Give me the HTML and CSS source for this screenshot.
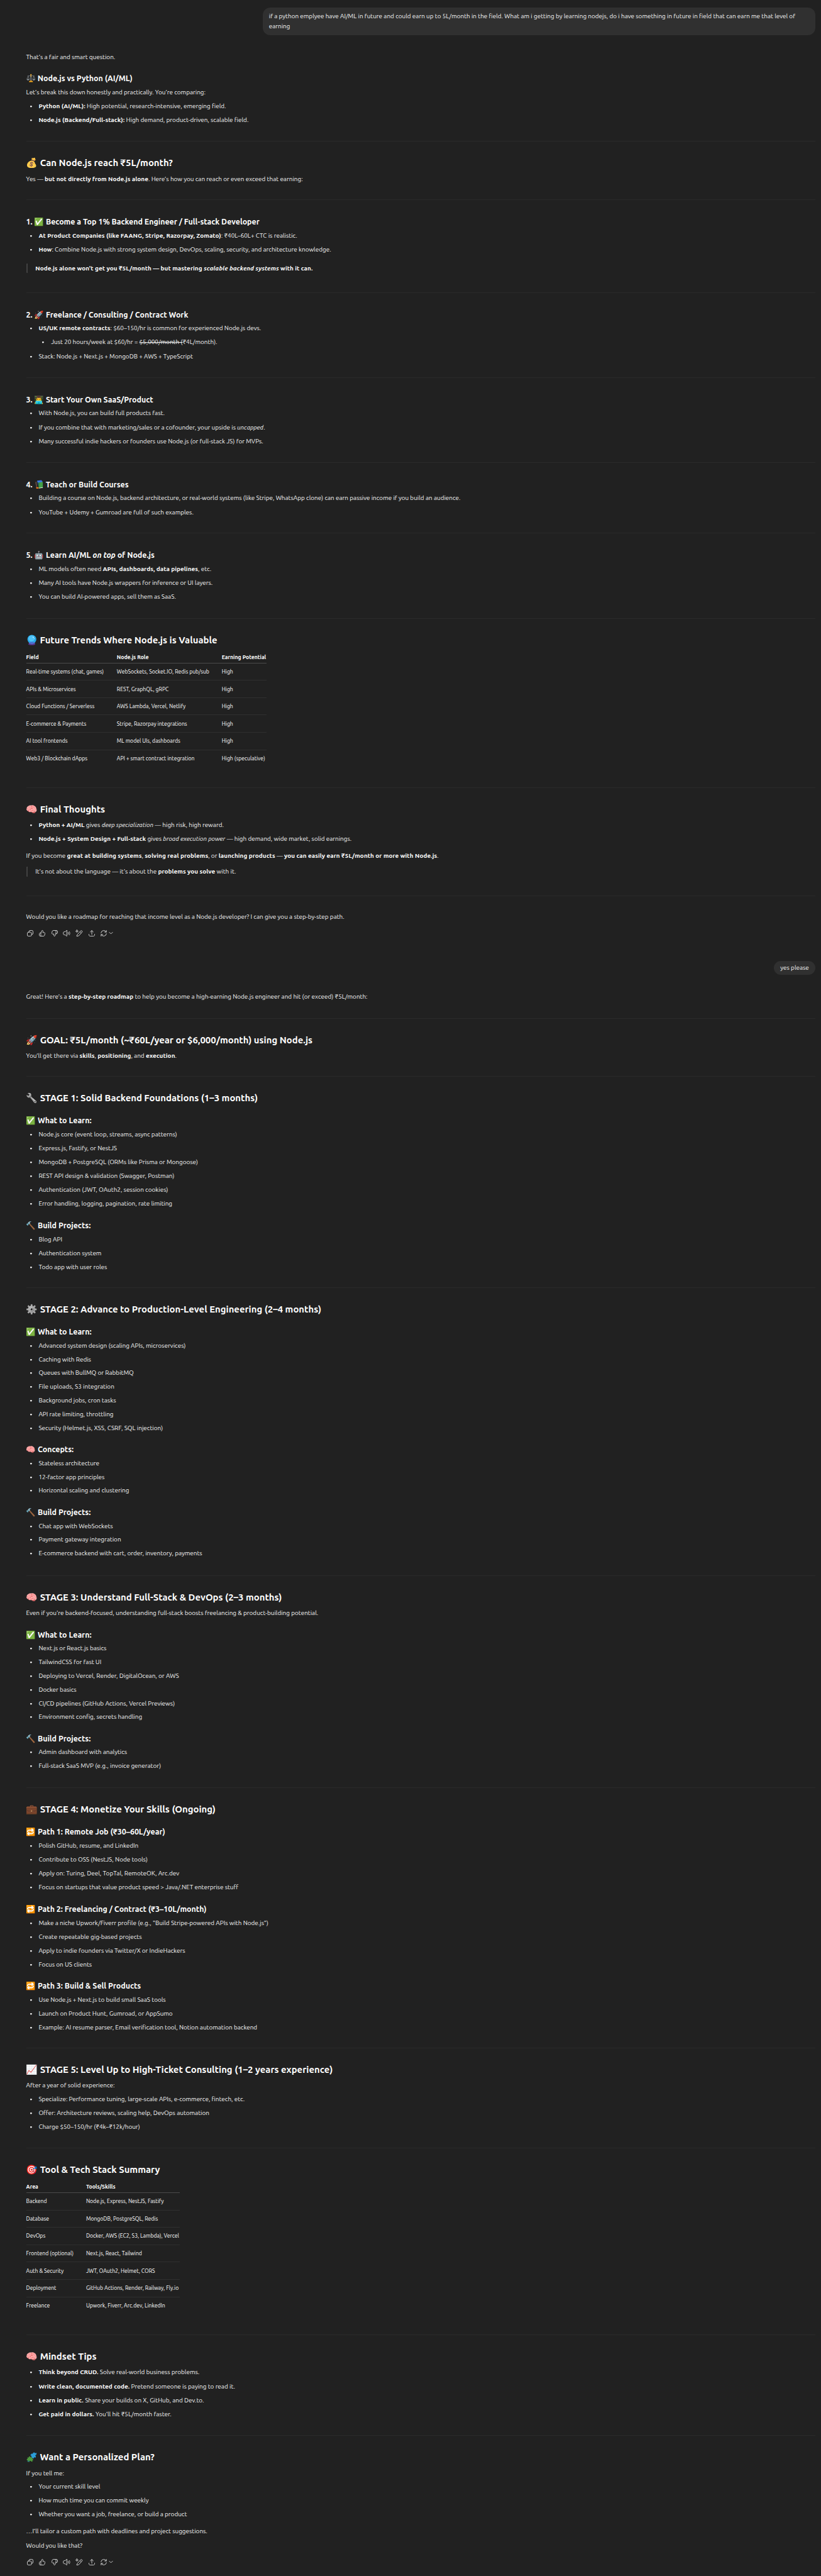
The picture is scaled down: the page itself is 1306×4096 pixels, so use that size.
FILE: index.html
```html
<!DOCTYPE html>
<html lang="en">
<head>
<meta charset="utf-8">
<title>Node.js career roadmap</title>
<link rel="stylesheet" href="styles.css">
</head>
<body>
<svg class="sprite" aria-hidden="true">
  <symbol id="i-copy" viewBox="0 0 20 20"><path d="M7 6V5.5A3 3 0 0 1 10 2.5h4.500a3 3 0 0 1 3 3V10a3 3 0 0 1-3 3H14"/><rect x="2.500" y="7" width="11" height="10.500" rx="2.800"/></symbol>
  <symbol id="i-up" viewBox="0 0 20 20"><path d="M6.500 9 10 2.300c2 0 2.800 1.400 2.400 3.100L11.800 8h3.500c1.700 0 2.700 1.300 2.300 2.900l-1.300 4.700c-.3 1.200-1.200 1.900-2.400 1.900H5c-1.500 0-2.500-1-2.500-2.500v-3.500C2.500 10 3.500 9 5 9h1.500zM6.500 9v8.500"/></symbol>
  <symbol id="i-down" viewBox="0 0 20 20"><path d="M13.500 11 10 17.700c-2 0-2.800-1.400-2.400-3.100L8.200 12H4.700C3 12 2 10.700 2.400 9.100l1.300-4.700c.3-1.200 1.200-1.900 2.400-1.900H15c1.500 0 2.500 1 2.500 2.500v3.500c0 1.500-1 2.500-2.500 2.500h-1.500zM13.500 11V2.500"/></symbol>
  <symbol id="i-sound" viewBox="0 0 20 20"><path d="M10.500 2.500v15c-1.800 0-3.200-3.500-5.500-3.500H3.500C2 14 1.200 12.500 1.200 10S2 6 3.500 6H5c2.300 0 3.700-3.500 5.500-3.500zM13.800 7.200c1 1.600 1 4 0 5.600M17 5.500c2 2.600 2 6.400 0 9"/></symbol>
  <symbol id="i-edit" viewBox="0 0 20 20"><path d="m5 13.500 8.800-9.700a2.400 2.400 0 0 1 3.600 3.300L8.700 16.700 4 17.700zM12 6l3.200 3"/><path class="fill" d="m4 1.200.9 2.400 2.400.9-2.400.9L4 7.800l-.9-2.400-2.400-.9 2.400-.9z"/></symbol>
  <symbol id="i-share" viewBox="0 0 20 20"><path d="M10 13V3M6 6.500 10 2.700l4 3.800M2.500 12.500v2c0 1.800 1.200 3 3 3h9c1.800 0 3-1.200 3-3v-2"/></symbol>
  <symbol id="i-retry" viewBox="0 0 20 20"><path d="M2.800 9A7.300 7.300 0 0 1 16.500 6.500M17 2.500v4.300h-4.300M17.200 11A7.300 7.300 0 0 1 3.500 13.500M3 17.500v-4.300h4.300"/></symbol>
  <symbol id="i-chevron" viewBox="0 0 12 12"><path d="m1.500 4 4.500 4.500L10.500 4"/></symbol>

  <symbol id="e-scales" viewBox="0 0 32 32"><path d="M4 8h24M6 9 2 19M6 9l4 10M26 9l-4 10M26 9l4 10" fill="none" stroke="#8a9297" stroke-width="1.600"/><path d="M1 19h10c0 3-2 5-5 5s-5-2-5-5zM21 19h10c0 3-2 5-5 5s-5-2-5-5z" fill="#8a9297"/><path d="M14.600 5h2.800v20h-2.800z" fill="#9aa1a5"/><circle cx="16" cy="4" r="2.500" fill="#f2b134"/><circle cx="16" cy="9" r="2" fill="#f2b134"/><path d="M12 25h8l3 3v2H9v-2z" fill="#f5a81c"/></symbol>
  <symbol id="e-crystal" viewBox="0 0 32 32"><path d="M8 23h16l2 6c-2 2-18 2-20 0z" fill="#6a45a8"/><path d="M7 27c4 2 14 2 18 0l1 2c-3 2.500-17 2.500-20 0z" fill="#4e3384"/><circle cx="16" cy="14" r="13" fill="#29a9e8"/><circle cx="15" cy="11.500" r="9" fill="#4fc3f7"/><path d="M8 24c4 3 12 3 16 0-4-4-12-4-16 0z" fill="#4c6fd0"/><circle cx="20" cy="8" r="1.600" fill="#d5f2ff"/><circle cx="23" cy="12" r="1" fill="#d5f2ff"/></symbol>
  <symbol id="e-books" viewBox="0 0 32 32"><path d="M9 3 24 1l3 4v17H12z" fill="#3b78e0"/><path d="m2 8 6-2 4 20-5 3z" fill="#5b4a3f"/><path d="m7 9 4-1 3 18-4 2z" fill="#222"/><path d="M5 26h10v4l-8 1z" fill="#f57c1f"/><path d="m13 10 16-3v21l-14 2z" fill="#43a047"/><path d="m13 10 3-.6V30l-1 .1z" fill="#1f6b2a"/><path d="m15 28 14-2v2l-14 2z" fill="#e8e8e8"/></symbol>
  <symbol id="e-puzzle" viewBox="0 0 32 32"><path d="m15 6 4 1c-1-4 5-6 6-2l5-1-1 6c-3-1-4 4-1 4l-1 4-5-1c1 4-5 5-5 1l-3-1 1-4c-4 0-4-5 0-5z" fill="#2b9ed8"/><path d="m3 17 4 1c-1-4 5-5 5-1l6 1-1 4c4-1 4 5 0 4l1 4-5-1c0-3-5-2-4 2l-6-1 1-4c-4 0-4-5 0-5z" fill="#4c9a3f"/><path d="m3 27 6 1v2l-6-1z" fill="#1d6fa8"/></symbol>
</svg>

<main class="thread">
  <div class="bubble">if a python emplyee have AI/ML in future and could earn up to 5L/month in the field. What am i getting by learning nodejs, do i have something in future in field that can earn me that level of earning</div>

  <article class="reply reply-answer">
    <section class="intro">
      <p>That’s a fair and smart question.</p>
      <h3><svg class="emoji"><use href="#e-scales"/></svg> Node.js vs Python (AI/ML)</h3>
      <p>Let’s break this down honestly and practically. You’re comparing:</p>
      <ul>
        <li><strong>Python (AI/ML):</strong> High potential, research-intensive, emerging field.</li>
        <li><strong>Node.js (Backend/Full-stack):</strong> High demand, product-driven, scalable field.</li>
      </ul>
    </section>
    <section>
      <h2><span class="warm">💰</span> Can Node.js reach ₹5L/month?</h2>
      <p>Yes — <strong>but not directly from Node.js alone</strong>. Here’s how you can reach or even exceed that earning:</p>
    </section>
    <section>
      <h3>1. ✅ Become a Top 1% Backend Engineer / Full-stack Developer</h3>
      <ul>
        <li><strong>At Product Companies (like FAANG, Stripe, Razorpay, Zomato)</strong>: ₹40L–60L+ CTC is realistic.</li>
        <li><strong>How</strong>: Combine Node.js with strong system design, DevOps, scaling, security, and architecture knowledge.</li>
      </ul>
      <blockquote><strong>Node.js alone won't get you ₹5L/month — but mastering <em>scalable backend systems</em> with it can.</strong></blockquote>
    </section>
    <section>
      <h3>2. 🚀 Freelance / Consulting / Contract Work</h3>
      <ul>
        <li><strong>US/UK remote contracts</strong>: $60–150/hr is common for experienced Node.js devs.
          <ul>
            <li>Just 20 hours/week at $60/hr = <del>$5,000/month (</del>₹4L/month).</li>
          </ul>
        </li>
        <li>Stack: Node.js + Next.js + MongoDB + AWS + TypeScript</li>
      </ul>
    </section>
    <section>
      <h3>3. 👨‍💻 Start Your Own SaaS/Product</h3>
      <ul>
        <li>With Node.js, you can build full products fast.</li>
        <li>If you combine that with marketing/sales or a cofounder, your upside is <em>uncapped</em>.</li>
        <li>Many successful indie hackers or founders use Node.js (or full-stack JS) for MVPs.</li>
      </ul>
    </section>
    <section>
      <h3>4. <svg class="emoji"><use href="#e-books"/></svg> Teach or Build Courses</h3>
      <ul>
        <li>Building a course on Node.js, backend architecture, or real-world systems (like Stripe, WhatsApp clone) can earn passive income if you build an audience.</li>
        <li>YouTube + Udemy + Gumroad are full of such examples.</li>
      </ul>
    </section>
    <section>
      <h3>5. 🤖 Learn AI/ML <em>on top</em> of Node.js</h3>
      <ul>
        <li>ML models often need <strong>APIs, dashboards, data pipelines</strong>, etc.</li>
        <li>Many AI tools have Node.js wrappers for inference or UI layers.</li>
        <li>You can build AI-powered apps, sell them as SaaS.</li>
      </ul>
    </section>
    <section>
      <h2><svg class="emoji"><use href="#e-crystal"/></svg> Future Trends Where Node.js is Valuable</h2>
      <table class="trends">
        <colgroup><col class="c-field"><col class="c-role"><col class="c-earn"></colgroup>
        <thead><tr><th>Field</th><th>Node.js Role</th><th>Earning Potential</th></tr></thead>
        <tbody>
          <tr><td>Real-time systems (chat, games)</td><td>WebSockets, Socket.IO, Redis pub/sub</td><td>High</td></tr>
          <tr><td>APIs &amp; Microservices</td><td>REST, GraphQL, gRPC</td><td>High</td></tr>
          <tr><td>Cloud Functions / Serverless</td><td>AWS Lambda, Vercel, Netlify</td><td>High</td></tr>
          <tr><td>E-commerce &amp; Payments</td><td>Stripe, Razorpay integrations</td><td>High</td></tr>
          <tr><td>AI tool frontends</td><td>ML model UIs, dashboards</td><td>High</td></tr>
          <tr><td>Web3 / Blockchain dApps</td><td>API + smart contract integration</td><td>High (speculative)</td></tr>
        </tbody>
      </table>
    </section>
    <section>
      <h2>🧠 Final Thoughts</h2>
      <ul>
        <li><strong>Python + AI/ML</strong> gives <em>deep specialization</em> — high risk, high reward.</li>
        <li><strong>Node.js + System Design + Full-stack</strong> gives <em>broad execution power</em> — high demand, wide market, solid earnings.</li>
      </ul>
      <p>If you become <strong>great at building systems</strong>, <strong>solving real problems</strong>, or <strong>launching products</strong> — <strong>you can easily earn ₹5L/month or more with Node.js</strong>.</p>
      <blockquote>It's not about the language — it's about the <strong>problems you solve</strong> with it.</blockquote>
    </section>
    <section>
      <p>Would you like a roadmap for reaching that income level as a Node.js developer? I can give you a step-by-step path.</p>
      <div class="actions">
        <svg><use href="#i-copy"/></svg><svg><use href="#i-up"/></svg><svg><use href="#i-down"/></svg><svg><use href="#i-sound"/></svg><svg><use href="#i-edit"/></svg><svg><use href="#i-share"/></svg><svg><use href="#i-retry"/></svg><svg class="chevron"><use href="#i-chevron"/></svg>
      </div>
    </section>
  </article>

  <div class="bubble bubble-short">yes please</div>

  <article class="reply reply-roadmap">
    <section class="intro">
      <p>Great! Here’s a <strong>step-by-step roadmap</strong> to help you become a high-earning Node.js engineer and hit (or exceed) ₹5L/month:</p>
    </section>
    <section>
      <h2>🚀 GOAL: ₹5L/month (~₹60L/year or $6,000/month) using Node.js</h2>
      <p>You’ll get there via <strong>skills</strong>, <strong>positioning</strong>, and <strong>execution</strong>.</p>
    </section>
    <section>
      <h2><span class="gray">🔧</span> STAGE 1: Solid Backend Foundations (1–3 months)</h2>
      <h3>✅ What to Learn:</h3>
      <ul>
        <li>Node.js core (event loop, streams, async patterns)</li>
        <li>Express.js, Fastify, or NestJS</li>
        <li>MongoDB + PostgreSQL (ORMs like Prisma or Mongoose)</li>
        <li>REST API design &amp; validation (Swagger, Postman)</li>
        <li>Authentication (JWT, OAuth2, session cookies)</li>
        <li>Error handling, logging, pagination, rate limiting</li>
      </ul>
      <h3>🔨 Build Projects:</h3>
      <ul>
        <li>Blog API</li>
        <li>Authentication system</li>
        <li>Todo app with user roles</li>
      </ul>
    </section>
    <section class="snug">
      <h2><span class="gray">⚙️</span> STAGE 2: Advance to Production-Level Engineering (2–4 months)</h2>
      <h3>✅ What to Learn:</h3>
      <ul>
        <li>Advanced system design (scaling APIs, microservices)</li>
        <li>Caching with Redis</li>
        <li>Queues with BullMQ or RabbitMQ</li>
        <li>File uploads, S3 integration</li>
        <li>Background jobs, cron tasks</li>
        <li>API rate limiting, throttling</li>
        <li>Security (Helmet.js, XSS, CSRF, SQL injection)</li>
      </ul>
      <h3>🧠 Concepts:</h3>
      <ul>
        <li>Stateless architecture</li>
        <li>12-factor app principles</li>
        <li>Horizontal scaling and clustering</li>
      </ul>
      <h3>🔨 Build Projects:</h3>
      <ul>
        <li>Chat app with WebSockets</li>
        <li>Payment gateway integration</li>
        <li>E-commerce backend with cart, order, inventory, payments</li>
      </ul>
    </section>
    <section class="snug">
      <h2>🧠 STAGE 3: Understand Full-Stack &amp; DevOps (2–3 months)</h2>
      <p>Even if you're backend-focused, understanding full-stack boosts freelancing &amp; product-building potential.</p>
      <h3>✅ What to Learn:</h3>
      <ul>
        <li>Next.js or React.js basics</li>
        <li>TailwindCSS for fast UI</li>
        <li>Deploying to Vercel, Render, DigitalOcean, or AWS</li>
        <li>Docker basics</li>
        <li>CI/CD pipelines (GitHub Actions, Vercel Previews)</li>
        <li>Environment config, secrets handling</li>
      </ul>
      <h3>🔨 Build Projects:</h3>
      <ul>
        <li>Admin dashboard with analytics</li>
        <li>Full-stack SaaS MVP (e.g., invoice generator)</li>
      </ul>
    </section>
    <section>
      <h2>💼 STAGE 4: Monetize Your Skills (Ongoing)</h2>
      <h3>🔁 Path 1: Remote Job (₹30–60L/year)</h3>
      <ul>
        <li>Polish GitHub, resume, and LinkedIn</li>
        <li>Contribute to OSS (NestJS, Node tools)</li>
        <li>Apply on: Turing, Deel, TopTal, RemoteOK, Arc.dev</li>
        <li>Focus on startups that value product speed &gt; Java/.NET enterprise stuff</li>
      </ul>
      <h3>🔁 Path 2: Freelancing / Contract (₹3–10L/month)</h3>
      <ul>
        <li>Make a niche Upwork/Fiverr profile (e.g., "Build Stripe-powered APIs with Node.js")</li>
        <li>Create repeatable gig-based projects</li>
        <li>Apply to indie founders via Twitter/X or IndieHackers</li>
        <li>Focus on US clients</li>
      </ul>
      <h3>🔁 Path 3: Build &amp; Sell Products</h3>
      <ul>
        <li>Use Node.js + Next.js to build small SaaS tools</li>
        <li>Launch on Product Hunt, Gumroad, or AppSumo</li>
        <li>Example: AI resume parser, Email verification tool, Notion automation backend</li>
      </ul>
    </section>
    <section>
      <h2>📈 STAGE 5: Level Up to High-Ticket Consulting (1–2 years experience)</h2>
      <p>After a year of solid experience:</p>
      <ul>
        <li>Specialize: Performance tuning, large-scale APIs, e-commerce, fintech, etc.</li>
        <li>Offer: Architecture reviews, scaling help, DevOps automation</li>
        <li>Charge $50–150/hr (₹4k–₹12k/hour)</li>
      </ul>
    </section>
    <section>
      <h2>🎯 Tool &amp; Tech Stack Summary</h2>
      <table class="stack">
        <colgroup><col class="c-area"><col class="c-tools"></colgroup>
        <thead><tr><th>Area</th><th>Tools/Skills</th></tr></thead>
        <tbody>
          <tr><td>Backend</td><td>Node.js, Express, NestJS, Fastify</td></tr>
          <tr><td>Database</td><td>MongoDB, PostgreSQL, Redis</td></tr>
          <tr><td>DevOps</td><td>Docker, AWS (EC2, S3, Lambda), Vercel</td></tr>
          <tr><td>Frontend (optional)</td><td>Next.js, React, Tailwind</td></tr>
          <tr><td>Auth &amp; Security</td><td>JWT, OAuth2, Helmet, CORS</td></tr>
          <tr><td>Deployment</td><td>GitHub Actions, Render, Railway, Fly.io</td></tr>
          <tr><td>Freelance</td><td>Upwork, Fiverr, Arc.dev, LinkedIn</td></tr>
        </tbody>
      </table>
    </section>
    <section>
      <h2>🧠 Mindset Tips</h2>
      <ul>
        <li><strong>Think beyond CRUD.</strong> Solve real-world business problems.</li>
        <li><strong>Write clean, documented code.</strong> Pretend someone is paying to read it.</li>
        <li><strong>Learn in public.</strong> Share your builds on X, GitHub, and Dev.to.</li>
        <li><strong>Get paid in dollars.</strong> You'll hit ₹5L/month faster.</li>
      </ul>
    </section>
    <section>
      <h2><svg class="emoji"><use href="#e-puzzle"/></svg> Want a Personalized Plan?</h2>
      <p>If you tell me:</p>
      <ul>
        <li>Your current skill level</li>
        <li>How much time you can commit weekly</li>
        <li>Whether you want a job, freelance, or build a product</li>
      </ul>
      <p>…I’ll tailor a custom path with deadlines and project suggestions.</p>
      <p>Would you like that?</p>
      <div class="actions">
        <svg><use href="#i-copy"/></svg><svg><use href="#i-up"/></svg><svg><use href="#i-down"/></svg><svg><use href="#i-sound"/></svg><svg><use href="#i-edit"/></svg><svg><use href="#i-share"/></svg><svg><use href="#i-retry"/></svg><svg class="chevron"><use href="#i-chevron"/></svg>
      </div>
    </section>
  </article>
</main>
</body>
</html>
```
FILE: styles.css
```css
* { box-sizing: border-box; }

html { background: #212121; }

body {
  margin: 0;
  background: #212121;
  color: #f4f4f4;
  font-family: "Ubuntu", "Noto Sans", "Noto Color Emoji", sans-serif;
  font-size: 9.92px;
  line-height: 15.2px;
}

.sprite { display: none; }

.thread {
  display: flex;
  flex-direction: column;
  height: 4096px;
  padding: 11.6px 9.2px 0 41.6px;
  overflow: hidden;
}

/* User messages */
.bubble {
  align-self: flex-end;
  width: 878.7px;
  padding: 6.9px 9.6px;
  border-radius: 12px;
  background: #303030;
}

.bubble-short {
  width: auto;
  height: 22px;
  padding: 3.3px 10px;
  border-radius: 11px;
}

/* Assistant replies: one row per ruled section */
.reply { display: grid; }

.reply-answer {
  margin-top: 26.9px;
  height: 1445.5px;
  grid-template-rows: 141.8px 92.3px 147.8px 135.1px 135px 112.7px 135.4px 268.9px 172px 1fr;
}

.reply-roadmap {
  margin-top: 27.2px;
  grid-template-rows: 41.2px 92.7px 335.9px 457.5px 337.8px 413.2px 159.5px 296.8px 160.1px 220px;
}

section {
  --li-gap: 6.9px;
  border-top: 1px solid #2a2a2a;
  padding-top: 23px;
}

section.snug { --li-gap: 6.6px; }

section.intro {
  border-top: 0;
  padding-top: 0;
}

h2, h3, p, ul, blockquote { margin: 0; font-weight: 400; }

h2, h3 {
  height: 22px;
  line-height: 22px;
  font-weight: 600;
  color: #fff;
  white-space: nowrap;
}

h2 { font-size: 14.89px; }
h3 { font-size: 12.4px; }

.emoji {
  width: 1.17em;
  height: 1.17em;
  margin: 0 0.035em;
  vertical-align: -0.22em;
}

.gray { filter: grayscale(1); }
.warm { filter: hue-rotate(-10deg) saturate(0.85) brightness(1.05); }

strong { font-weight: 600; color: #fff; letter-spacing: 0.06px; }

section > p:first-child { padding-top: 2px; }
section.intro > p:first-child { padding-top: 0; }

h2 + p, h2 + ul { margin-top: 6.5px; }
h2 + table { margin-top: 6.9px; }
h3 + p, h3 + ul { margin-top: 3.8px; }
h2 + h3 { margin-top: 12.9px; }
ul + h3, p + h3 { margin-top: 15.2px; }
p + ul { margin-top: 6.5px; }
ul + p { margin-top: 11.9px; }
p + p { margin-top: 7px; }
ul + blockquote { margin-top: 15.3px; }
p + blockquote { margin-top: 9.8px; }

ul { list-style: none; padding: 0; }

li {
  padding-left: 19.8px;
  background: radial-gradient(circle at 7.4px 8.2px, #ececec 1px, transparent 1.7px) no-repeat;
}

li + li, li > ul { margin-top: var(--li-gap); }

blockquote {
  padding-left: 12.6px;
  border-left: 2px solid #424242;
  border-radius: 1px;
}

/* Tables */
table {
  table-layout: fixed;
  border-collapse: separate;
  border-spacing: 0;
  font-size: 8.65px;
  line-height: 12px;
  color: #fff;
}

.trends { width: 382px; }
.stack { width: 244px; }
.c-field { width: 144.2px; }
.c-role { width: 167px; }
.c-area { width: 95.3px; }

th, td { padding: 0; text-align: left; white-space: nowrap; }
th { height: 19px; font-weight: 600; border-bottom: 1px solid #4a4a4a; }
td { height: 27.6px; border-bottom: 1px solid #2f2f2f; }
tr:last-child td { border-bottom: 0; }

/* Message actions */
.actions {
  display: flex;
  align-items: center;
  gap: 7.6px;
  height: 14px;
  margin-top: 11.8px;
}

.actions svg {
  width: 12px;
  height: 12px;
  fill: none;
  stroke: #d0d0d0;
  stroke-width: 1.6;
  stroke-linecap: round;
  stroke-linejoin: round;
}

.actions .fill { fill: #d0d0d0; stroke: none; }
.actions .chevron { width: 7px; height: 7px; margin-left: -6px; }
```
